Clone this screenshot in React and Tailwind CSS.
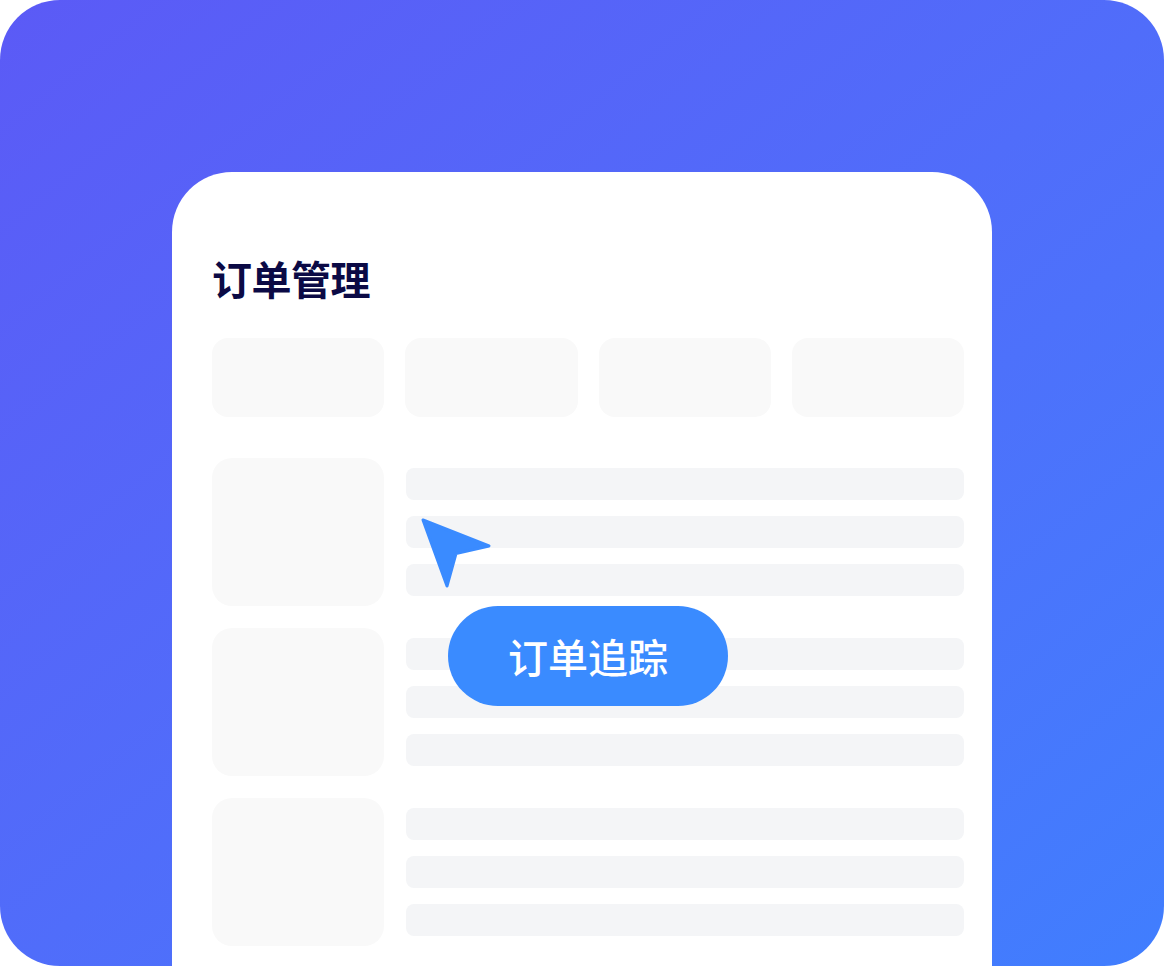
export default function App() {
  const rows = [0, 1, 2];
  return (
    <div className="w-[1164px] h-[966px] bg-white" style={{ fontFamily: '"Noto Sans CJK SC", "Noto Sans", sans-serif' }}>
      <div className="w-[1164px] h-[966px] rounded-[60px] overflow-hidden bg-gradient-to-br from-[#5B5AF6] to-[#407EFE] pt-[172px] pl-[172px]">
        <div className="relative w-[820px] h-[794px] bg-white rounded-t-[60px] pl-[40px] pr-[28px] pt-[82px]">
          <h1 className="text-[40px] leading-[48px] font-bold text-[#0B0A45] tracking-[-0.5px]">订单管理</h1>
          <div className="mt-[36px] grid grid-cols-4 gap-[21px]">
            {[0, 1, 2, 3].map((i) => (
              <div key={i} className="h-[79px] rounded-[16px] bg-[#F9F9F9]" />
            ))}
          </div>
          <div className="mt-[41px] flex flex-col gap-[22px]">
            {rows.map((r) => (
              <div key={r} className="flex gap-[22px]">
                <div className="w-[172px] h-[148px] rounded-[20px] bg-[#F9F9F9] shrink-0" />
                <div className="flex-1 pt-[10px] flex flex-col gap-[16px]">
                  <div className="h-[32px] rounded-[8px] bg-[#F4F5F7]" />
                  <div className="h-[32px] rounded-[8px] bg-[#F4F5F7]" />
                  <div className="h-[32px] rounded-[8px] bg-[#F4F5F7]" />
                </div>
              </div>
            ))}
          </div>
          <svg className="absolute left-[238px] top-[333px]" width="90" height="90" viewBox="0 0 90 90">
            <path d="M13 15 L79 41 L46 48.5 L37 81 Z" fill="#3A8BFF" stroke="#3A8BFF" strokeWidth="3" strokeLinejoin="round" />
          </svg>
          <div className="absolute left-[276px] top-[434px] w-[280px] h-[100px] rounded-full bg-[#3A8BFF] flex items-center justify-center">
            <span className="text-[40px] leading-[48px] font-medium text-white">订单追踪</span>
          </div>
        </div>
      </div>
    </div>
  );
}
